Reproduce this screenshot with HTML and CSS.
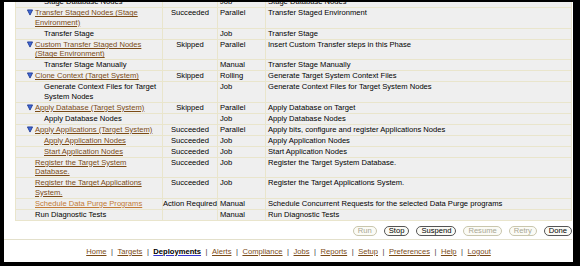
FILE: index.html
```html
<!DOCTYPE html>
<html>
<head>
	<meta charset="utf-8">
	<title>Deployment Procedure Steps</title>
	<link rel="stylesheet" href="styles.css">
</head>
<body>
	<div class="window">
		<table class="steps">
			<colgroup>
				<col class="c-step">
				<col class="c-status">
				<col class="c-type">
				<col class="c-desc">
			</colgroup>
			<tr>
				<td class="step"><div class="name child">Stage Database Nodes</div></td>
				<td class="status"></td>
				<td>Job</td>
				<td>Stage Database Nodes</td>
			</tr>
			<tr>
				<td class="step"><div class="name"><svg class="tw" viewBox="0 0 7 7"><polygon points="0.5,0.5 6.5,0.5 3.5,6.5"/></svg><a href="#">Transfer Staged Nodes (Stage Environment)</a></div></td>
				<td class="status">Succeeded</td>
				<td>Parallel</td>
				<td>Transfer Staged Environment</td>
			</tr>
			<tr>
				<td class="step"><div class="name child">Transfer Stage</div></td>
				<td class="status"></td>
				<td>Job</td>
				<td>Transfer Stage</td>
			</tr>
			<tr>
				<td class="step"><div class="name"><svg class="tw" viewBox="0 0 7 7"><polygon points="0.5,0.5 6.5,0.5 3.5,6.5"/></svg><a href="#">Custom Transfer Staged Nodes (Stage Environment)</a></div></td>
				<td class="status">Skipped</td>
				<td>Parallel</td>
				<td>Insert Custom Transfer steps in this Phase</td>
			</tr>
			<tr>
				<td class="step"><div class="name child">Transfer Stage Manually</div></td>
				<td class="status"></td>
				<td>Manual</td>
				<td>Transfer Stage Manually</td>
			</tr>
			<tr>
				<td class="step"><div class="name"><svg class="tw" viewBox="0 0 7 7"><polygon points="0.5,0.5 6.5,0.5 3.5,6.5"/></svg><a href="#">Clone Context (Target System)</a></div></td>
				<td class="status">Skipped</td>
				<td>Rolling</td>
				<td>Generate Target System Context Files</td>
			</tr>
			<tr>
				<td class="step"><div class="name child">Generate Context Files for Target System Nodes</div></td>
				<td class="status"></td>
				<td>Job</td>
				<td>Generate Context Files for Target System Nodes</td>
			</tr>
			<tr>
				<td class="step"><div class="name"><svg class="tw" viewBox="0 0 7 7"><polygon points="0.5,0.5 6.5,0.5 3.5,6.5"/></svg><a href="#">Apply Database (Target System)</a></div></td>
				<td class="status">Skipped</td>
				<td>Parallel</td>
				<td>Apply Database on Target</td>
			</tr>
			<tr>
				<td class="step"><div class="name child">Apply Database Nodes</div></td>
				<td class="status"></td>
				<td>Job</td>
				<td>Apply Database Nodes</td>
			</tr>
			<tr>
				<td class="step"><div class="name"><svg class="tw" viewBox="0 0 7 7"><polygon points="0.5,0.5 6.5,0.5 3.5,6.5"/></svg><a href="#">Apply Applications (Target System)</a></div></td>
				<td class="status">Succeeded</td>
				<td>Parallel</td>
				<td>Apply bits, configure and register Applications Nodes</td>
			</tr>
			<tr>
				<td class="step"><div class="name child"><a href="#">Apply Application Nodes</a></div></td>
				<td class="status">Succeeded</td>
				<td>Job</td>
				<td>Apply Application Nodes</td>
			</tr>
			<tr>
				<td class="step"><div class="name child"><a href="#">Start Application Nodes</a></div></td>
				<td class="status">Succeeded</td>
				<td>Job</td>
				<td>Start Application Nodes</td>
			</tr>
			<tr>
				<td class="step"><div class="name plain"><a href="#">Register the Target System Database.</a></div></td>
				<td class="status">Succeeded</td>
				<td>Job</td>
				<td>Register the Target System Database.</td>
			</tr>
			<tr>
				<td class="step"><div class="name plain"><a href="#">Register the Target Applications System.</a></div></td>
				<td class="status">Succeeded</td>
				<td>Job</td>
				<td>Register the Target Applications System.</td>
			</tr>
			<tr>
				<td class="step"><div class="name plain"><a href="#" class="visited">Schedule Data Purge Programs</a></div></td>
				<td class="status">Action Required</td>
				<td>Manual</td>
				<td>Schedule Concurrent Requests for the selected Data Purge programs</td>
			</tr>
			<tr>
				<td class="step"><div class="name plain">Run Diagnostic Tests</div></td>
				<td class="status"></td>
				<td>Manual</td>
				<td>Run Diagnostic Tests</td>
			</tr>
		</table>

		<div class="actions">
			<button type="button" class="btn" disabled>Run</button>
			<button type="button" class="btn">Stop</button>
			<button type="button" class="btn">Suspend</button>
			<button type="button" class="btn" disabled>Resume</button>
			<button type="button" class="btn" disabled>Retry</button>
			<button type="button" class="btn">Done</button>
		</div>

		<div class="rule"></div>

		<div class="footer">
			<a href="#">Home</a><span class="sep">|</span><a href="#">Targets</a><span class="sep">|</span><a href="#" class="current">Deployments</a><span class="sep">|</span><a href="#">Alerts</a><span class="sep">|</span><a href="#">Compliance</a><span class="sep">|</span><a href="#">Jobs</a><span class="sep">|</span><a href="#">Reports</a><span class="sep">|</span><a href="#">Setup</a><span class="sep">|</span><a href="#">Preferences</a><span class="sep">|</span><a href="#">Help</a><span class="sep">|</span><a href="#">Logout</a>
		</div>
	</div>
</body>
</html>
```
FILE: styles.css
```css
body {
	margin: 0;
	background: #000;
	font-family: "Liberation Sans", Arial, sans-serif;
	font-size: 7.6px;
	color: #000;
}

.window {
	margin: 2px 7px 0 4px;
	height: 260px;
	background: #fff;
	overflow: hidden;
}

a {
	color: #7b4b16;
	text-decoration: underline;
}

a.visited {
	color: #c27a35;
}

/* steps table */
.steps {
	border-collapse: collapse;
	table-layout: fixed;
	width: 556px;
	margin: -6px 0 0 11px;
	background: #efefef;
}

.c-step { width: 147px; }
.c-status { width: 55px; }
.c-type { width: 48px; }
.c-desc { width: 306px; }

.steps td {
	border: 1px solid #e9e5cc;
	padding: 0.25px 2px;
	line-height: 9.5px;
	vertical-align: top;
	white-space: nowrap;
}

.steps td.step {
	padding-left: 11px;
	padding-right: 0;
	white-space: normal;
}

.steps td.status {
	text-align: center;
	padding: 0.25px 0;
}

.name {
	display: flex;
	align-items: flex-start;
}

.name.plain {
	padding-left: 8px;
}

.name.child {
	padding-left: 17px;
}

.tw {
	flex: none;
	width: 6px;
	height: 7px;
	margin: 1px 2px 0 0;
	fill: #3f6ad8;
	stroke: #1c3690;
	stroke-width: 1;
}

/* buttons */
.actions {
	display: flex;
	justify-content: flex-end;
	gap: 7px;
	margin: 5px 1px 0 0;
}

.btn {
	font-family: inherit;
	font-size: 7.6px;
	line-height: 8px;
	padding: 0 4px;
	border: 1px solid #555;
	border-radius: 5px;
	background: #fbfbf6;
	color: #000;
}

.btn:disabled {
	border-color: #c9c6ad;
	color: #a9a793;
}

.rule {
	width: 568px;
	height: 1px;
	margin-top: 3px;
	background: #e3e0cb;
}

/* global links */
.footer {
	margin-top: 7px;
	text-align: center;
	line-height: 10px;
}

.footer .sep {
	padding: 0 4.5px;
	color: #444;
}

.footer a.current {
	color: #000;
	font-weight: bold;
	text-decoration-color: #3333cc;
}
```
